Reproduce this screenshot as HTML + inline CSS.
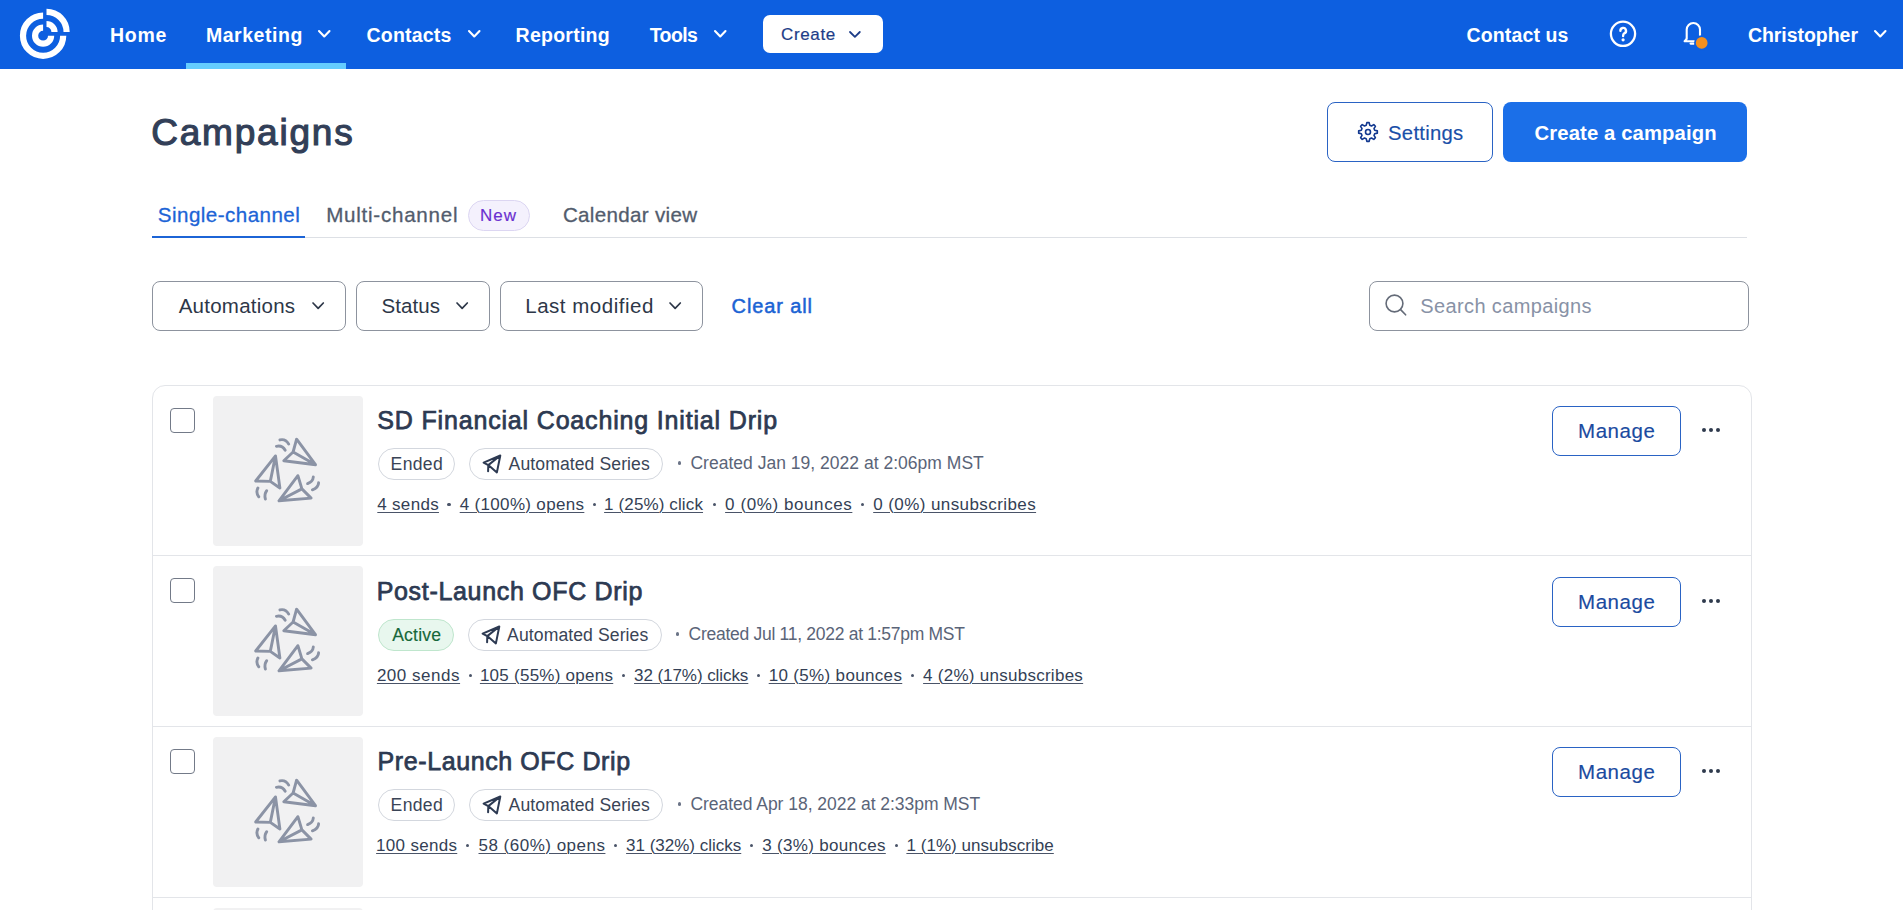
<!DOCTYPE html>
<html><head><meta charset="utf-8"><title>Campaigns</title>
<style>
html,body{margin:0;padding:0;background:#fff;width:1903px;height:910px;overflow:hidden;position:relative}
body{font-family:"Liberation Sans",sans-serif}
.a{position:absolute}
.t{position:absolute;white-space:nowrap;line-height:1}
svg.a{overflow:visible}
.stats{color:#343f55}
.stats u{text-decoration:underline;text-underline-offset:1.5px;text-decoration-thickness:1px;text-decoration-color:#4a5468}
.stats{letter-spacing:0.25px}
.stats .dot{display:inline-block;width:22px;letter-spacing:0;text-align:center;color:#444f63;font-size:13px;vertical-align:2px}
</style></head><body>
<div class="a" style="left:0;top:0;width:1903px;height:69px;background:#0d5fe0"></div>
<svg class="a" style="left:0;top:0" width="90" height="69">
<g fill="none" stroke="#fff" stroke-width="6.2">
<path d="M43.1 15.6 A20.1 20.1 0 1 0 63.2 35.7"/>
<path d="M46.5 11.9 A20.1 20.1 0 0 1 66.6 32"/>
<path d="M43.1 27.7 A8 8 0 1 0 51.1 35.7"/>
<path d="M46.5 24 A8 8 0 0 1 54.5 32"/>
</g></svg>
<div class="t " style="left:110.00px;top:25.89px;font-size:19.5px;color:#fff;font-weight:700;letter-spacing:0.700px;">Home</div>
<div class="t " style="left:205.90px;top:25.89px;font-size:19.5px;color:#fff;font-weight:700;letter-spacing:0.550px;">Marketing</div>
<div class="t " style="left:366.50px;top:25.89px;font-size:19.5px;color:#fff;font-weight:700;letter-spacing:0.200px;">Contacts</div>
<div class="t " style="left:515.60px;top:25.89px;font-size:19.5px;color:#fff;font-weight:700;letter-spacing:0.250px;">Reporting</div>
<div class="t " style="left:649.70px;top:25.89px;font-size:19.5px;color:#fff;font-weight:700;letter-spacing:-0.575px;">Tools</div>
<div class="t " style="left:1466.50px;top:25.89px;font-size:19.5px;color:#fff;font-weight:700;letter-spacing:0.133px;">Contact us</div>
<div class="t " style="left:1747.90px;top:25.89px;font-size:19.5px;color:#fff;font-weight:700;letter-spacing:-0.040px;">Christopher</div>
<svg class="a" style="left:316.5px;top:28.5px" width="14.5" height="9.5"><polyline points="2,2 7.25,7.5 12.5,2" fill="none" stroke="#fff" stroke-width="2.1" stroke-linecap="round" stroke-linejoin="round"/></svg>
<svg class="a" style="left:466.5px;top:28.5px" width="14.5" height="9.5"><polyline points="2,2 7.25,7.5 12.5,2" fill="none" stroke="#fff" stroke-width="2.1" stroke-linecap="round" stroke-linejoin="round"/></svg>
<svg class="a" style="left:713px;top:29px" width="14.5" height="9.5"><polyline points="2,2 7.25,7.5 12.5,2" fill="none" stroke="#fff" stroke-width="2.1" stroke-linecap="round" stroke-linejoin="round"/></svg>
<svg class="a" style="left:1873px;top:29px" width="14.5" height="9.5"><polyline points="2,2 7.25,7.5 12.5,2" fill="none" stroke="#fff" stroke-width="2.1" stroke-linecap="round" stroke-linejoin="round"/></svg>
<div class="a" style="left:186px;top:63px;width:160px;height:6px;background:#64ccff"></div>
<div class="a" style="left:763px;top:15px;width:120px;height:38px;background:#fff;border-radius:7px"></div>
<div class="t " style="left:781.10px;top:26.11px;font-size:17px;color:#1d3d88;font-weight:400;letter-spacing:0.620px;-webkit-text-stroke:0.2px #1d3d88">Create</div>
<svg class="a" style="left:848px;top:30px" width="13.8" height="8.8"><polyline points="2,2 6.9,6.8 11.8,2" fill="none" stroke="#1d3d88" stroke-width="1.8" stroke-linecap="round" stroke-linejoin="round"/></svg>
<svg class="a" style="left:1605px;top:16px" width="36" height="36">
<circle cx="18" cy="17.8" r="12.1" fill="none" stroke="#fff" stroke-width="2.3"/>
<path d="M15.4 14.8 A2.8 2.8 0 1 1 19.3 17.3 C18.5 17.8 18.1 18.4 18.1 20" fill="none" stroke="#fff" stroke-width="2.4" stroke-linecap="round"/>
<circle cx="18.1" cy="23.8" r="1.6" fill="#fff"/>
</svg>
<svg class="a" style="left:1675px;top:14px" width="40" height="40">
<path d="M11.7 25.5 V15.6 A6.65 6.65 0 0 1 25 15.6 V25" fill="none" stroke="#fff" stroke-width="2.1"/>
<path d="M11.7 25 L9.6 27.3 H21" fill="none" stroke="#fff" stroke-width="2.1" stroke-linejoin="round"/>
<path d="M15.6 29.6 H18.8" fill="none" stroke="#fff" stroke-width="2.2" stroke-linecap="round"/>
<circle cx="26.7" cy="28.9" r="7.6" fill="#0d5fe0"/>
<circle cx="26.7" cy="28.9" r="5.9" fill="#f5901e"/>
</svg>
<div class="t " style="left:151.20px;top:114.08px;font-size:37px;color:#323f58;font-weight:400;letter-spacing:1.787px;-webkit-text-stroke:1.15px #323f58">Campaigns</div>
<div class="a" style="left:1327px;top:102px;width:166px;height:60px;box-sizing:border-box;border:1px solid #2a63c4;border-radius:8px;background:#fff"></div>
<svg class="a" style="left:1356px;top:120px" width="24" height="24" viewBox="0 0 24 24">
<path fill="none" stroke="#12388f" stroke-width="1.6" stroke-linejoin="round" d="M10.21 5.34 L10.85 2.67 L13.15 2.67 L13.79 5.34 L15.45 6.02 L17.79 4.59 L19.41 6.21 L17.98 8.55 L18.66 10.21 L21.33 10.85 L21.33 13.15 L18.66 13.79 L17.98 15.45 L19.41 17.79 L17.79 19.41 L15.45 17.98 L13.79 18.66 L13.15 21.33 L10.85 21.33 L10.21 18.66 L8.55 17.98 L6.21 19.41 L4.59 17.79 L6.02 15.45 L5.34 13.79 L2.67 13.15 L2.67 10.85 L5.34 10.21 L6.02 8.55 L4.59 6.21 L6.21 4.59 L8.55 6.02 Z"/>
<circle cx="12" cy="12" r="2.5" fill="none" stroke="#12388f" stroke-width="1.6"/>
</svg>
<div class="t " style="left:1388.10px;top:122.82px;font-size:20.3px;color:#1a4fa8;font-weight:400;letter-spacing:0.243px;-webkit-text-stroke:0.15px #1a4fa8">Settings</div>
<div class="a" style="left:1503px;top:102px;width:244px;height:60px;border-radius:8px;background:#1b6fe8"></div>
<div class="t " style="left:1534.50px;top:122.52px;font-size:20.3px;color:#fff;font-weight:700;letter-spacing:0.112px;">Create a campaign</div>
<div class="a" style="left:152px;top:237px;width:1595px;height:1px;background:#dde0e5"></div>
<div class="a" style="left:152px;top:236px;width:153px;height:2px;background:#1c64d6"></div>
<div class="t " style="left:157.80px;top:205.26px;font-size:20.6px;color:#1c64d6;font-weight:400;letter-spacing:0.446px;-webkit-text-stroke:0.3px #1c64d6">Single-channel</div>
<div class="t " style="left:326.20px;top:205.26px;font-size:20.6px;color:#525c6d;font-weight:400;letter-spacing:0.733px;-webkit-text-stroke:0.3px #525c6d">Multi-channel</div>
<div class="a" style="left:468px;top:199.5px;width:62px;height:31px;box-sizing:border-box;border:1px solid #dcd6f2;border-radius:16px;background:#f4f1fd"></div>
<div class="t " style="left:479.90px;top:207.31px;font-size:17px;color:#6a2fd0;font-weight:400;letter-spacing:1.050px;-webkit-text-stroke:0.15px #6a2fd0">New</div>
<div class="t " style="left:562.90px;top:205.26px;font-size:20.6px;color:#525c6d;font-weight:400;letter-spacing:0.308px;-webkit-text-stroke:0.3px #525c6d">Calendar view</div>
<div class="a" style="left:152px;top:281px;width:194px;height:50px;box-sizing:border-box;border:1px solid #8d939e;border-radius:8px;background:#fff"></div>
<div class="t " style="left:178.70px;top:295.65px;font-size:20.5px;color:#2d3748;font-weight:400;letter-spacing:0.240px;">Automations</div>
<svg class="a" style="left:310.5px;top:300.5px" width="14.3" height="9.3"><polyline points="2,2 7.15,7.3 12.3,2" fill="none" stroke="#2d3748" stroke-width="1.7" stroke-linecap="round" stroke-linejoin="round"/></svg>
<div class="a" style="left:356px;top:281px;width:134px;height:50px;box-sizing:border-box;border:1px solid #8d939e;border-radius:8px;background:#fff"></div>
<div class="t " style="left:381.40px;top:295.65px;font-size:20.5px;color:#2d3748;font-weight:400;letter-spacing:0.100px;">Status</div>
<svg class="a" style="left:455px;top:300.5px" width="14.3" height="9.3"><polyline points="2,2 7.15,7.3 12.3,2" fill="none" stroke="#2d3748" stroke-width="1.7" stroke-linecap="round" stroke-linejoin="round"/></svg>
<div class="a" style="left:500px;top:281px;width:203px;height:50px;box-sizing:border-box;border:1px solid #8d939e;border-radius:8px;background:#fff"></div>
<div class="t " style="left:525.30px;top:295.65px;font-size:20.5px;color:#2d3748;font-weight:400;letter-spacing:0.508px;">Last modified</div>
<svg class="a" style="left:667.5px;top:300.5px" width="14.3" height="9.3"><polyline points="2,2 7.15,7.3 12.3,2" fill="none" stroke="#2d3748" stroke-width="1.7" stroke-linecap="round" stroke-linejoin="round"/></svg>
<div class="t " style="left:731.60px;top:296.47px;font-size:20px;color:#1b63d4;font-weight:400;letter-spacing:0.875px;-webkit-text-stroke:0.5px #1b63d4">Clear all</div>
<div class="a" style="left:1369px;top:281px;width:380px;height:50px;box-sizing:border-box;border:1px solid #8d939e;border-radius:8px;background:#fff"></div>
<svg class="a" style="left:1380px;top:290px" width="32" height="32">
<circle cx="14.5" cy="13.5" r="8.4" fill="none" stroke="#646b78" stroke-width="1.6"/>
<path d="M20.6 19.6 L25.6 24.8" stroke="#646b78" stroke-width="1.6" stroke-linecap="round"/>
</svg>
<div class="t " style="left:1420.30px;top:295.77px;font-size:20px;color:#8892a6;font-weight:400;letter-spacing:0.367px;">Search campaigns</div>
<div class="a" style="left:152px;top:385px;width:1600px;height:700px;box-sizing:border-box;border:1px solid #e3e5e9;border-radius:13px;background:#fff"></div>
<div class="a" style="left:213px;top:396px;width:150px;height:150px;background:#f1f1f2;border-radius:4px"></div>
<svg class="a" style="left:213px;top:396px" width="150" height="150" viewBox="0 0 150 150">
<g fill="none" stroke="#8b93a5" stroke-width="2.9" stroke-linejoin="round" stroke-linecap="round">
<path d="M83.6 43.2 L80.1 56 L70.8 64.8 L102.5 68.7 Z M80.1 56 L102.5 68.7"/>
<path d="M62.5 59.9 L42.7 85 L57.3 85.4 L66.9 92 Z M62.5 59.9 L57.3 85.4"/>
<path d="M84.9 79.7 L66 104.8 L98.1 102.1 L88.9 92.9 Z M88.9 92.9 L66 104.8"/>
<path d="M66.9 43.9 Q72.5 42.5 75.7 48.1"/>
<path d="M63.4 50.3 Q69.2 49 72.2 54.2"/>
<path d="M44.9 92 Q42.5 96.5 45.8 100.8"/>
<path d="M53.7 94.7 Q51 98.5 52.4 103"/>
<path d="M100.3 81 Q100 85.5 94.6 87.6"/>
<path d="M105.6 86.7 Q105.5 91.5 99.4 93.8"/>
</g></svg>
<div class="a" style="left:170px;top:408px;width:25px;height:25px;box-sizing:border-box;border:1.4px solid #737a88;border-radius:4px"></div>
<div class="t " style="left:377.30px;top:407.54px;font-size:25px;color:#2d3a52;font-weight:400;letter-spacing:0.830px;-webkit-text-stroke:0.75px #2d3a52">SD Financial Coaching Initial Drip</div>
<div class="a" style="left:378px;top:448px;width:77px;height:32px;box-sizing:border-box;border:1px solid #d3d7de;border-radius:16px;background:#fff"></div>
<div class="t " style="left:390.60px;top:455.80px;font-size:17.6px;color:#3a4456;font-weight:400;letter-spacing:0.325px;">Ended</div>
<div class="a" style="left:469px;top:448px;width:194px;height:32px;box-sizing:border-box;border:1px solid #d3d7de;border-radius:16px;background:#fff"></div>
<svg class="a" style="left:482px;top:454px" width="20" height="20" viewBox="0 0 20 20">
<path d="M18.3 1.5 L1.6 8.6 L6.3 11.1 L14.9 18.4 Z M6.3 11.1 L18.3 1.5 M6.3 11.1 L6.1 17.3" fill="none" stroke="#2d3a52" stroke-width="2" stroke-linejoin="round" stroke-linecap="round"/>
</svg>
<div class="t " style="left:508.60px;top:455.80px;font-size:17.6px;color:#3a4456;font-weight:400;letter-spacing:0.087px;">Automated Series</div>
<div class="a" style="left:677.80px;top:461.2px;width:3.4px;height:3.4px;border-radius:50%;background:#6b7487"></div>
<div class="t " style="left:690.40px;top:455.19px;font-size:17.5px;color:#5a6478;font-weight:400;letter-spacing:0.018px;">Created Jan 19, 2022 at 2:06pm MST</div>
<div class="t stats" style="left:377.30px;top:495.71px;font-size:17px;letter-spacing:0.300px"><u>4 sends</u></div>
<div class="t stats" style="left:459.70px;top:495.71px;font-size:17px;letter-spacing:0.331px"><u>4 (100%) opens</u></div>
<div class="t stats" style="left:604.10px;top:495.71px;font-size:17px;letter-spacing:0.125px"><u>1 (25%) click</u></div>
<div class="t stats" style="left:725.10px;top:495.71px;font-size:17px;letter-spacing:0.585px"><u>0 (0%) bounces</u></div>
<div class="t stats" style="left:873.20px;top:495.71px;font-size:17px;letter-spacing:0.417px"><u>0 (0%) unsubscribes</u></div>
<div class="a" style="left:447.45px;top:502.90px;width:3.2px;height:3.2px;border-radius:50%;background:#4a5468"></div>
<div class="a" style="left:592.80px;top:502.90px;width:3.2px;height:3.2px;border-radius:50%;background:#4a5468"></div>
<div class="a" style="left:712.70px;top:502.90px;width:3.2px;height:3.2px;border-radius:50%;background:#4a5468"></div>
<div class="a" style="left:860.90px;top:502.90px;width:3.2px;height:3.2px;border-radius:50%;background:#4a5468"></div>
<div class="a" style="left:1552px;top:406px;width:129px;height:50px;box-sizing:border-box;border:1px solid #2a63c4;border-radius:8px;background:#fff"></div>
<div class="t " style="left:1578.00px;top:420.75px;font-size:20.5px;color:#1a4aa0;font-weight:400;letter-spacing:0.560px;-webkit-text-stroke:0.15px #1a4aa0">Manage</div>
<div class="a" style="left:1702px;top:428px;width:4px;height:4px;border-radius:2px;background:#2f3a4d"></div>
<div class="a" style="left:1709px;top:428px;width:4px;height:4px;border-radius:2px;background:#2f3a4d"></div>
<div class="a" style="left:1716px;top:428px;width:4px;height:4px;border-radius:2px;background:#2f3a4d"></div>
<div class="a" style="left:153px;top:555px;width:1598px;height:1px;background:#e3e5e9"></div>
<div class="a" style="left:213px;top:566px;width:150px;height:150px;background:#f1f1f2;border-radius:4px"></div>
<svg class="a" style="left:213px;top:566px" width="150" height="150" viewBox="0 0 150 150">
<g fill="none" stroke="#8b93a5" stroke-width="2.9" stroke-linejoin="round" stroke-linecap="round">
<path d="M83.6 43.2 L80.1 56 L70.8 64.8 L102.5 68.7 Z M80.1 56 L102.5 68.7"/>
<path d="M62.5 59.9 L42.7 85 L57.3 85.4 L66.9 92 Z M62.5 59.9 L57.3 85.4"/>
<path d="M84.9 79.7 L66 104.8 L98.1 102.1 L88.9 92.9 Z M88.9 92.9 L66 104.8"/>
<path d="M66.9 43.9 Q72.5 42.5 75.7 48.1"/>
<path d="M63.4 50.3 Q69.2 49 72.2 54.2"/>
<path d="M44.9 92 Q42.5 96.5 45.8 100.8"/>
<path d="M53.7 94.7 Q51 98.5 52.4 103"/>
<path d="M100.3 81 Q100 85.5 94.6 87.6"/>
<path d="M105.6 86.7 Q105.5 91.5 99.4 93.8"/>
</g></svg>
<div class="a" style="left:170px;top:578px;width:25px;height:25px;box-sizing:border-box;border:1.4px solid #737a88;border-radius:4px"></div>
<div class="t " style="left:376.70px;top:578.54px;font-size:25px;color:#2d3a52;font-weight:400;letter-spacing:0.674px;-webkit-text-stroke:0.75px #2d3a52">Post-Launch OFC Drip</div>
<div class="a" style="left:378px;top:619px;width:76px;height:32px;box-sizing:border-box;border:1px solid #bfe6cd;border-radius:16px;background:#e8f7ee"></div>
<div class="t " style="left:392.20px;top:626.80px;font-size:17.6px;color:#17683a;font-weight:400;letter-spacing:0.180px;-webkit-text-stroke:0.15px #17683a">Active</div>
<div class="a" style="left:467.5px;top:619px;width:194px;height:32px;box-sizing:border-box;border:1px solid #d3d7de;border-radius:16px;background:#fff"></div>
<svg class="a" style="left:480.5px;top:625px" width="20" height="20" viewBox="0 0 20 20">
<path d="M18.3 1.5 L1.6 8.6 L6.3 11.1 L14.9 18.4 Z M6.3 11.1 L18.3 1.5 M6.3 11.1 L6.1 17.3" fill="none" stroke="#2d3a52" stroke-width="2" stroke-linejoin="round" stroke-linecap="round"/>
</svg>
<div class="t " style="left:507.10px;top:626.80px;font-size:17.6px;color:#3a4456;font-weight:400;letter-spacing:0.087px;">Automated Series</div>
<div class="a" style="left:676.00px;top:632.2px;width:3.4px;height:3.4px;border-radius:50%;background:#6b7487"></div>
<div class="t " style="left:688.60px;top:626.19px;font-size:17.5px;color:#5a6478;font-weight:400;letter-spacing:-0.282px;">Created Jul 11, 2022 at 1:57pm MST</div>
<div class="t stats" style="left:376.90px;top:666.71px;font-size:17px;letter-spacing:0.525px"><u>200 sends</u></div>
<div class="t stats" style="left:479.90px;top:666.71px;font-size:17px;letter-spacing:0.257px"><u>105 (55%) opens</u></div>
<div class="t stats" style="left:634.10px;top:666.71px;font-size:17px;letter-spacing:-0.071px"><u>32 (17%) clicks</u></div>
<div class="t stats" style="left:768.70px;top:666.71px;font-size:17px;letter-spacing:0.336px"><u>10 (5%) bounces</u></div>
<div class="t stats" style="left:923.10px;top:666.71px;font-size:17px;letter-spacing:0.267px"><u>4 (2%) unsubscribes</u></div>
<div class="a" style="left:468.50px;top:673.90px;width:3.2px;height:3.2px;border-radius:50%;background:#4a5468"></div>
<div class="a" style="left:621.95px;top:673.90px;width:3.2px;height:3.2px;border-radius:50%;background:#4a5468"></div>
<div class="a" style="left:757.30px;top:673.90px;width:3.2px;height:3.2px;border-radius:50%;background:#4a5468"></div>
<div class="a" style="left:910.80px;top:673.90px;width:3.2px;height:3.2px;border-radius:50%;background:#4a5468"></div>
<div class="a" style="left:1552px;top:577px;width:129px;height:50px;box-sizing:border-box;border:1px solid #2a63c4;border-radius:8px;background:#fff"></div>
<div class="t " style="left:1578.00px;top:591.75px;font-size:20.5px;color:#1a4aa0;font-weight:400;letter-spacing:0.560px;-webkit-text-stroke:0.15px #1a4aa0">Manage</div>
<div class="a" style="left:1702px;top:599px;width:4px;height:4px;border-radius:2px;background:#2f3a4d"></div>
<div class="a" style="left:1709px;top:599px;width:4px;height:4px;border-radius:2px;background:#2f3a4d"></div>
<div class="a" style="left:1716px;top:599px;width:4px;height:4px;border-radius:2px;background:#2f3a4d"></div>
<div class="a" style="left:153px;top:726px;width:1598px;height:1px;background:#e3e5e9"></div>
<div class="a" style="left:213px;top:737px;width:150px;height:150px;background:#f1f1f2;border-radius:4px"></div>
<svg class="a" style="left:213px;top:737px" width="150" height="150" viewBox="0 0 150 150">
<g fill="none" stroke="#8b93a5" stroke-width="2.9" stroke-linejoin="round" stroke-linecap="round">
<path d="M83.6 43.2 L80.1 56 L70.8 64.8 L102.5 68.7 Z M80.1 56 L102.5 68.7"/>
<path d="M62.5 59.9 L42.7 85 L57.3 85.4 L66.9 92 Z M62.5 59.9 L57.3 85.4"/>
<path d="M84.9 79.7 L66 104.8 L98.1 102.1 L88.9 92.9 Z M88.9 92.9 L66 104.8"/>
<path d="M66.9 43.9 Q72.5 42.5 75.7 48.1"/>
<path d="M63.4 50.3 Q69.2 49 72.2 54.2"/>
<path d="M44.9 92 Q42.5 96.5 45.8 100.8"/>
<path d="M53.7 94.7 Q51 98.5 52.4 103"/>
<path d="M100.3 81 Q100 85.5 94.6 87.6"/>
<path d="M105.6 86.7 Q105.5 91.5 99.4 93.8"/>
</g></svg>
<div class="a" style="left:170px;top:749px;width:25px;height:25px;box-sizing:border-box;border:1.4px solid #737a88;border-radius:4px"></div>
<div class="t " style="left:377.60px;top:748.54px;font-size:25px;color:#2d3a52;font-weight:400;letter-spacing:0.594px;-webkit-text-stroke:0.75px #2d3a52">Pre-Launch OFC Drip</div>
<div class="a" style="left:378px;top:789px;width:77px;height:32px;box-sizing:border-box;border:1px solid #d3d7de;border-radius:16px;background:#fff"></div>
<div class="t " style="left:390.60px;top:796.80px;font-size:17.6px;color:#3a4456;font-weight:400;letter-spacing:0.325px;">Ended</div>
<div class="a" style="left:469px;top:789px;width:194px;height:32px;box-sizing:border-box;border:1px solid #d3d7de;border-radius:16px;background:#fff"></div>
<svg class="a" style="left:482px;top:795px" width="20" height="20" viewBox="0 0 20 20">
<path d="M18.3 1.5 L1.6 8.6 L6.3 11.1 L14.9 18.4 Z M6.3 11.1 L18.3 1.5 M6.3 11.1 L6.1 17.3" fill="none" stroke="#2d3a52" stroke-width="2" stroke-linejoin="round" stroke-linecap="round"/>
</svg>
<div class="t " style="left:508.60px;top:796.80px;font-size:17.6px;color:#3a4456;font-weight:400;letter-spacing:0.087px;">Automated Series</div>
<div class="a" style="left:677.80px;top:802.2px;width:3.4px;height:3.4px;border-radius:50%;background:#6b7487"></div>
<div class="t " style="left:690.40px;top:796.19px;font-size:17.5px;color:#5a6478;font-weight:400;letter-spacing:-0.033px;">Created Apr 18, 2022 at 2:33pm MST</div>
<div class="t stats" style="left:376.10px;top:836.71px;font-size:17px;letter-spacing:0.300px"><u>100 sends</u></div>
<div class="t stats" style="left:478.50px;top:836.71px;font-size:17px;letter-spacing:0.492px"><u>58 (60%) opens</u></div>
<div class="t stats" style="left:626.10px;top:836.71px;font-size:17px;letter-spacing:-0.007px"><u>31 (32%) clicks</u></div>
<div class="t stats" style="left:762.20px;top:836.71px;font-size:17px;letter-spacing:0.323px"><u>3 (3%) bounces</u></div>
<div class="t stats" style="left:906.40px;top:836.71px;font-size:17px;letter-spacing:0.053px"><u>1 (1%) unsubscribe</u></div>
<div class="a" style="left:466.20px;top:843.90px;width:3.2px;height:3.2px;border-radius:50%;background:#4a5468"></div>
<div class="a" style="left:613.90px;top:843.90px;width:3.2px;height:3.2px;border-radius:50%;background:#4a5468"></div>
<div class="a" style="left:750.15px;top:843.90px;width:3.2px;height:3.2px;border-radius:50%;background:#4a5468"></div>
<div class="a" style="left:894.70px;top:843.90px;width:3.2px;height:3.2px;border-radius:50%;background:#4a5468"></div>
<div class="a" style="left:1552px;top:747px;width:129px;height:50px;box-sizing:border-box;border:1px solid #2a63c4;border-radius:8px;background:#fff"></div>
<div class="t " style="left:1578.00px;top:761.75px;font-size:20.5px;color:#1a4aa0;font-weight:400;letter-spacing:0.560px;-webkit-text-stroke:0.15px #1a4aa0">Manage</div>
<div class="a" style="left:1702px;top:769px;width:4px;height:4px;border-radius:2px;background:#2f3a4d"></div>
<div class="a" style="left:1709px;top:769px;width:4px;height:4px;border-radius:2px;background:#2f3a4d"></div>
<div class="a" style="left:1716px;top:769px;width:4px;height:4px;border-radius:2px;background:#2f3a4d"></div>
<div class="a" style="left:153px;top:897px;width:1598px;height:1px;background:#e3e5e9"></div>
<div class="a" style="left:213px;top:908px;width:150px;height:150px;background:#f1f1f2;border-radius:4px"></div>
</body></html>
